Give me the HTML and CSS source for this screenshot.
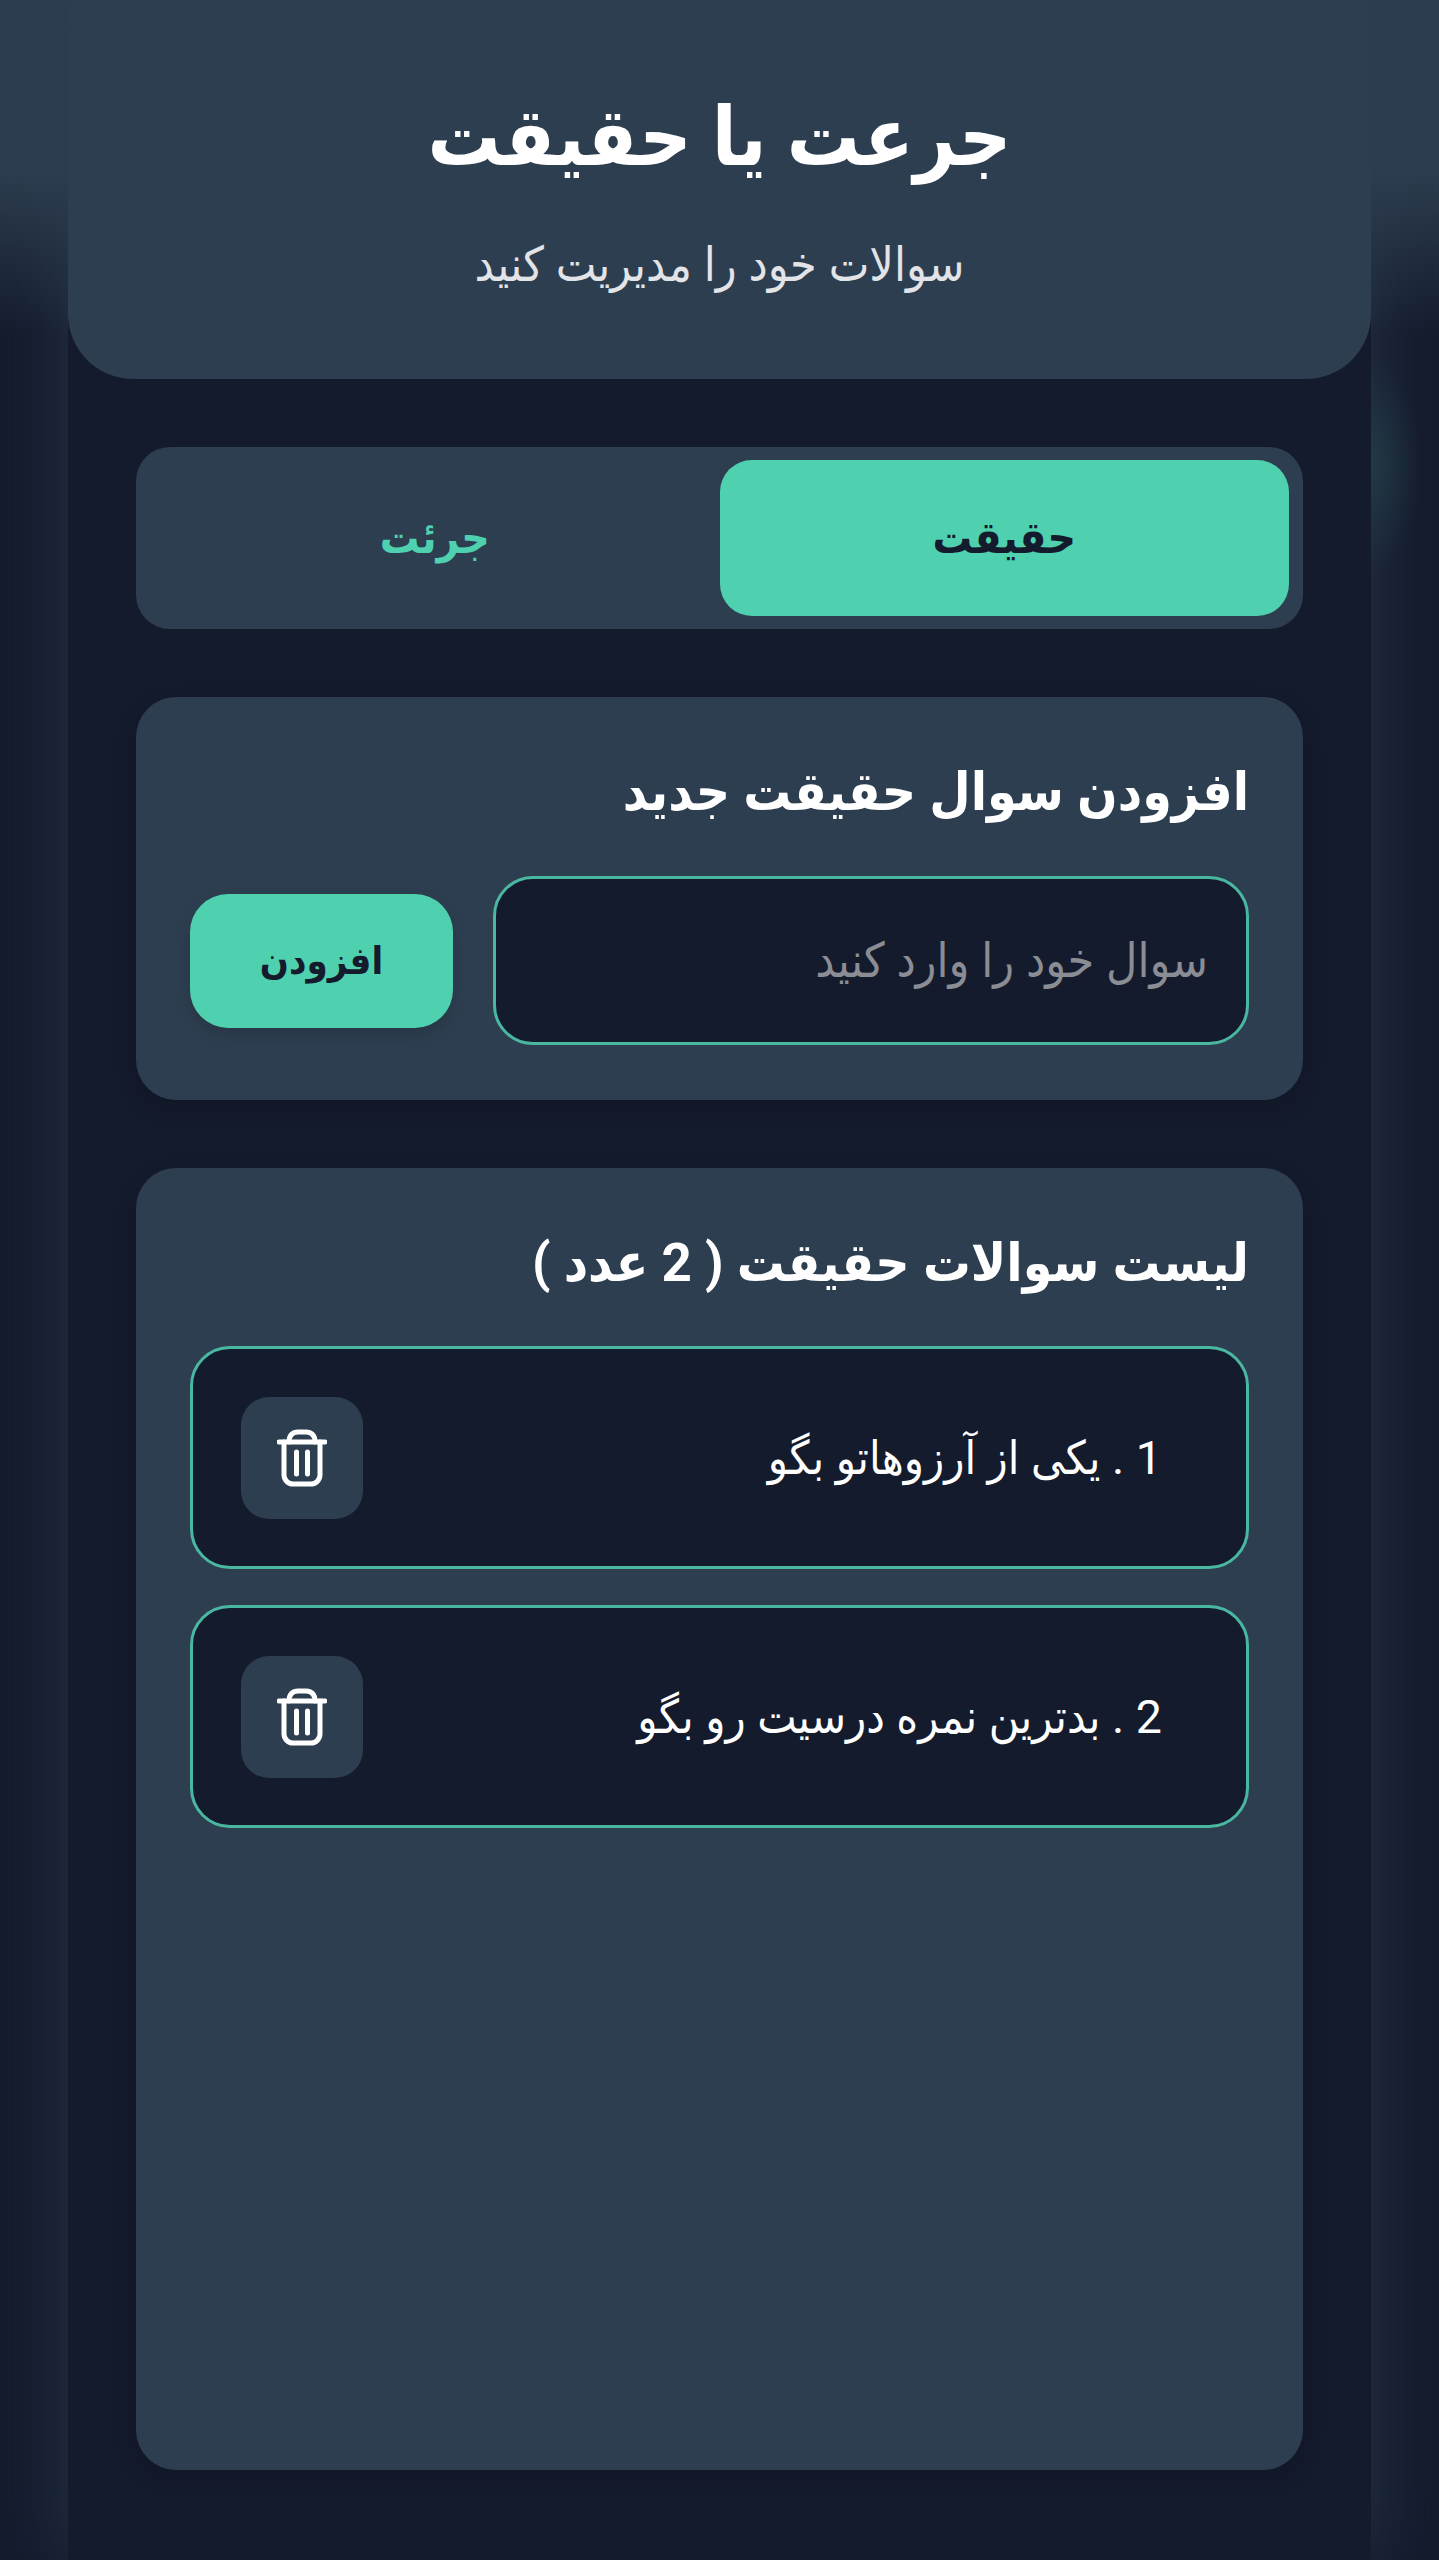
FILE: index.html
```html
<!DOCTYPE html>
<html lang="fa" dir="rtl">
<head>
    <meta charset="UTF-8">
    <meta name="viewport" content="width=device-width, initial-scale=1.0">
    <title>جرعت یا حقیقت</title>
    <link rel="stylesheet" href="styles.css">
</head>
<body>
    <div class="app">
        <header class="header">
            <h1>جرعت یا حقیقت</h1>
            <p>سوالات خود را مدیریت کنید</p>
        </header>

        <main class="content">
            <div class="tabs">
                <button class="tab active">حقیقت</button>
                <button class="tab">جرئت</button>
            </div>

            <section class="card add-card">
                <h2>افزودن سوال حقیقت جدید</h2>
                <div class="add-row">
                    <input class="question-input" type="text" placeholder="سوال خود را وارد کنید">
                    <button class="add-btn">افزودن</button>
                </div>
            </section>

            <section class="card list-card">
                <h2>لیست سوالات حقیقت ( 2 عدد )</h2>
                <div class="question">
                    <span class="question-text">1 . یکی از آرزوهاتو بگو</span>
                    <button class="delete-btn" aria-label="حذف">
                        <svg viewBox="0 0 50 60" width="50" height="60" fill="none" stroke="currentColor" stroke-width="5" stroke-linecap="round" stroke-linejoin="round">
                            <path d="M2 14h46"/>
                            <path d="M12 14c0-7 4-10 9-10h8c5 0 9 3 9 10"/>
                            <path d="M7 14v33a9 9 0 0 0 9 9h18a9 9 0 0 0 9-9V14"/>
                            <path d="M19.500 24v22"/>
                            <path d="M30.500 24v22"/>
                        </svg>
                    </button>
                </div>
                <div class="question">
                    <span class="question-text">2 . بدترین نمره درسیت رو بگو</span>
                    <button class="delete-btn" aria-label="حذف">
                        <svg viewBox="0 0 50 60" width="50" height="60" fill="none" stroke="currentColor" stroke-width="5" stroke-linecap="round" stroke-linejoin="round">
                            <path d="M2 14h46"/>
                            <path d="M12 14c0-7 4-10 9-10h8c5 0 9 3 9 10"/>
                            <path d="M7 14v33a9 9 0 0 0 9 9h18a9 9 0 0 0 9-9V14"/>
                            <path d="M19.500 24v22"/>
                            <path d="M30.500 24v22"/>
                        </svg>
                    </button>
                </div>
            </section>
        </main>
    </div>
</body>
</html>
```

FILE: styles.css
```css
* {
    margin: 0;
    padding: 0;
    box-sizing: border-box;
    font-family: Roboto, 'DejaVu Sans Condensed', 'DejaVu Sans', sans-serif;
}

body {
    width: 1439px;
    height: 2560px;
    background:
        radial-gradient(ellipse 50px 110px at 1371px 465px, rgba(79, 209, 176, 0.16), transparent),
        linear-gradient(to bottom, #2d3e50 170px, #141b2d 335px);
    color: white;
    overflow: hidden;
}

.app {
    width: 1303px;
    height: 2560px;
    margin: 0 auto;
    background: #141b2d;
    box-shadow: 0 0 68px rgba(45, 62, 80, 0.75);
}

.header {
    height: 379px;
    padding-top: 94px;
    background: #2d3e50;
    border-radius: 0 0 65px 65px;
    text-align: center;
}

.header h1 {
    font-size: 81px;
    line-height: 88px;
    font-weight: 700;
}

.header p {
    margin-top: 57px;
    font-size: 48px;
    line-height: 52px;
    color: #e2e4e8;
}

.content {
    display: flex;
    flex-direction: column;
    gap: 68px;
    padding: 68px 68px 0;
}

.tabs {
    display: flex;
    height: 182px;
    padding: 13px 14px;
    background: #2d3e50;
    border-radius: 34px;
}

.tab {
    flex: 1;
    border: none;
    border-radius: 32px;
    background: none;
    color: #4fd1b0;
    font-size: 44px;
    font-weight: 700;
}

.tab.active {
    background: #4fd1b0;
    color: #141b2d;
}

.card {
    padding: 63px 54px 54px;
    background: #2d3e50;
    border-radius: 40px;
    box-shadow: 0 8px 24px rgba(0, 0, 0, 0.18);
}

.card h2 {
    font-size: 53px;
    line-height: 64px;
    font-weight: 700;
}

.add-card {
    height: 403px;
}

.add-row {
    display: flex;
    align-items: center;
    gap: 40px;
    margin-top: 52px;
}

.question-input {
    flex: 1;
    height: 169px;
    padding: 0 38px;
    background: #141b2d;
    border: 3px solid #4ab8a0;
    border-radius: 40px;
    color: white;
    font-size: 48px;
}

.question-input::placeholder {
    color: #8a8d93;
}

.add-btn {
    width: 263px;
    height: 134px;
    border: none;
    border-radius: 38px;
    background: #4fd1b0;
    color: #141b2d;
    font-size: 38px;
    font-weight: 700;
    box-shadow: 0 6px 14px rgba(0, 0, 0, 0.12);
}

.list-card {
    height: 1302px;
}

.question {
    display: flex;
    justify-content: space-between;
    align-items: center;
    height: 223px;
    margin-top: 36px;
    padding: 0 36px 0 48px;
    background: #141b2d;
    border: 3px solid #4ab8a0;
    border-radius: 40px;
}

.list-card h2 + .question {
    margin-top: 51px;
}

.question-text {
    padding-right: 48px;
    font-size: 46.500px;
}

.delete-btn {
    display: flex;
    align-items: center;
    justify-content: center;
    width: 122px;
    height: 122px;
    border: none;
    border-radius: 28px;
    background: #2d3e50;
    color: white;
}
```
